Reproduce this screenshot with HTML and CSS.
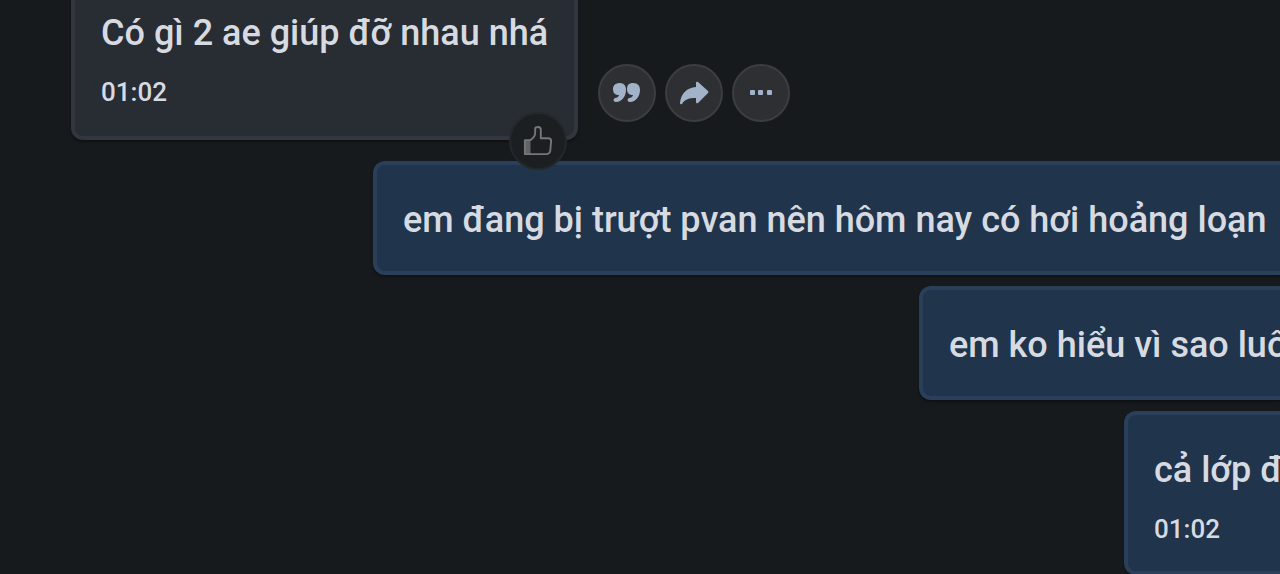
FILE: index.html
```html
<!DOCTYPE html>
<html lang="vi">
<head>
<meta charset="utf-8">
<meta name="viewport" content="width=device-width, initial-scale=1">
<title>Chat</title>
<link rel="stylesheet" href="styles.css">
</head>
<body>
<main class="chat">
  <div class="row received">
    <article class="bubble incoming">
      <p class="text">Có gì 2 ae giúp đỡ nhau nhá</p>
      <time class="time">01:02</time>
      <button class="reaction" type="button" aria-label="Like">
        <svg viewBox="0 0 32 34" width="30" height="32"><path d="M2 16h6v15H2z" fill="#626364"/><path d="M2 16h6q5-3 5-8V4q0-2 3-2t3 3v9h8q3 0 3 3l-1 11q-1 3-4 3H2z" fill="none" stroke="#777776" stroke-width="2" stroke-linejoin="round"/></svg>
      </button>
    </article>
    <div class="actions">
      <button class="action" type="button" aria-label="Quote">
        <svg viewBox="0 0 30 24" width="30" height="24"><path d="M8 2c4 0 6 3 6 7 0 6-4 12-10 12-3 0-3-3-1-4 2 0 4-2 4-3-4 0-6-2-6-6s3-6 7-6zM21 2c5 0 7 3 7 7 0 6-4 12-10 12-3 0-3-3-1-4 2 0 4-2 4-3-4 0-6-2-6-6s2-6 6-6z"/></svg>
      </button>
      <button class="action" type="button" aria-label="Share">
        <svg viewBox="0 0 32 26" width="32" height="26"><path d="M18 3q0-2 2-1l10 9q1 1 0 2l-10 10q-2 1-2-1v-4c-7 0-11 1-14 6q-2 1-2-1C3 13 9 8 18 7z"/></svg>
      </button>
      <button class="action" type="button" aria-label="More">
        <svg viewBox="0 0 24 6" width="24" height="6"><rect x="1" y="0" width="5" height="5" rx="1"/><rect x="9" y="0" width="5" height="5" rx="1"/><rect x="18" y="0" width="5" height="5" rx="1"/></svg>
      </button>
    </div>
  </div>
  <article class="bubble outgoing first"><p class="text">em đang bị trượt pvan nên hôm nay có hơi hoảng loạn</p></article>
  <article class="bubble outgoing second"><p class="text">em ko hiểu vì sao luô</p></article>
  <article class="bubble outgoing third"><p class="text">cả lớp đ</p><time class="time">01:02</time></article>
</main>
</body>
</html>
```
FILE: styles.css
```css
* { box-sizing: border-box; }
body {
  margin: 0;
  background: #171a1d;
  color: #d7dbe1;
  font-family: Roboto, "Noto Sans", sans-serif;
  font-weight: 500;
  overflow: hidden;
}
.chat {
  display: flex;
  flex-direction: column;
  gap: 11px;
}
.row {
  display: flex;
  align-items: flex-end;
  gap: 20px;
  padding-left: 71px;
  margin-bottom: 10px;
}
.bubble {
  position: relative;
  padding: 30px 26px 26px;
  border: 4px solid;
  border-radius: 12px;
  box-shadow: 0 2px 2px #0f1113;
}
.incoming {
  padding-top: 8px;
  padding-bottom: 28px;
  background: #282c33;
  border-color: #31363f;
  border-top: 0;
  border-radius: 0 0 12px 12px;
}
.outgoing {
  background: #20344c;
  border-color: #293f5a;
  border-right: 0;
  border-radius: 12px 0 0 12px;
  padding-right: 0;
}
.first { margin-left: 373px; }
.second { margin-left: 919px; }
.third { margin-left: 1124px; }
.text {
  margin: 0;
  font-size: 36px;
  line-height: 50px;
  white-space: nowrap;
}
.time {
  display: block;
  margin-top: 18px;
  font-size: 26px;
  line-height: 32px;
}
.reaction,
.action {
  display: grid;
  place-items: center;
  width: 58px;
  height: 58px;
  padding: 0;
  border: 2px solid #3b3e41;
  border-radius: 50%;
  background: #2e2f33;
}
.reaction {
  position: absolute;
  right: 7px;
  bottom: -34px;
  z-index: 1;
  border-color: #25282b;
  background: #1c1f22;
}
.actions {
  display: flex;
  gap: 9px;
  padding-bottom: 18px;
}
.action { fill: #a2b2c8; }
```
